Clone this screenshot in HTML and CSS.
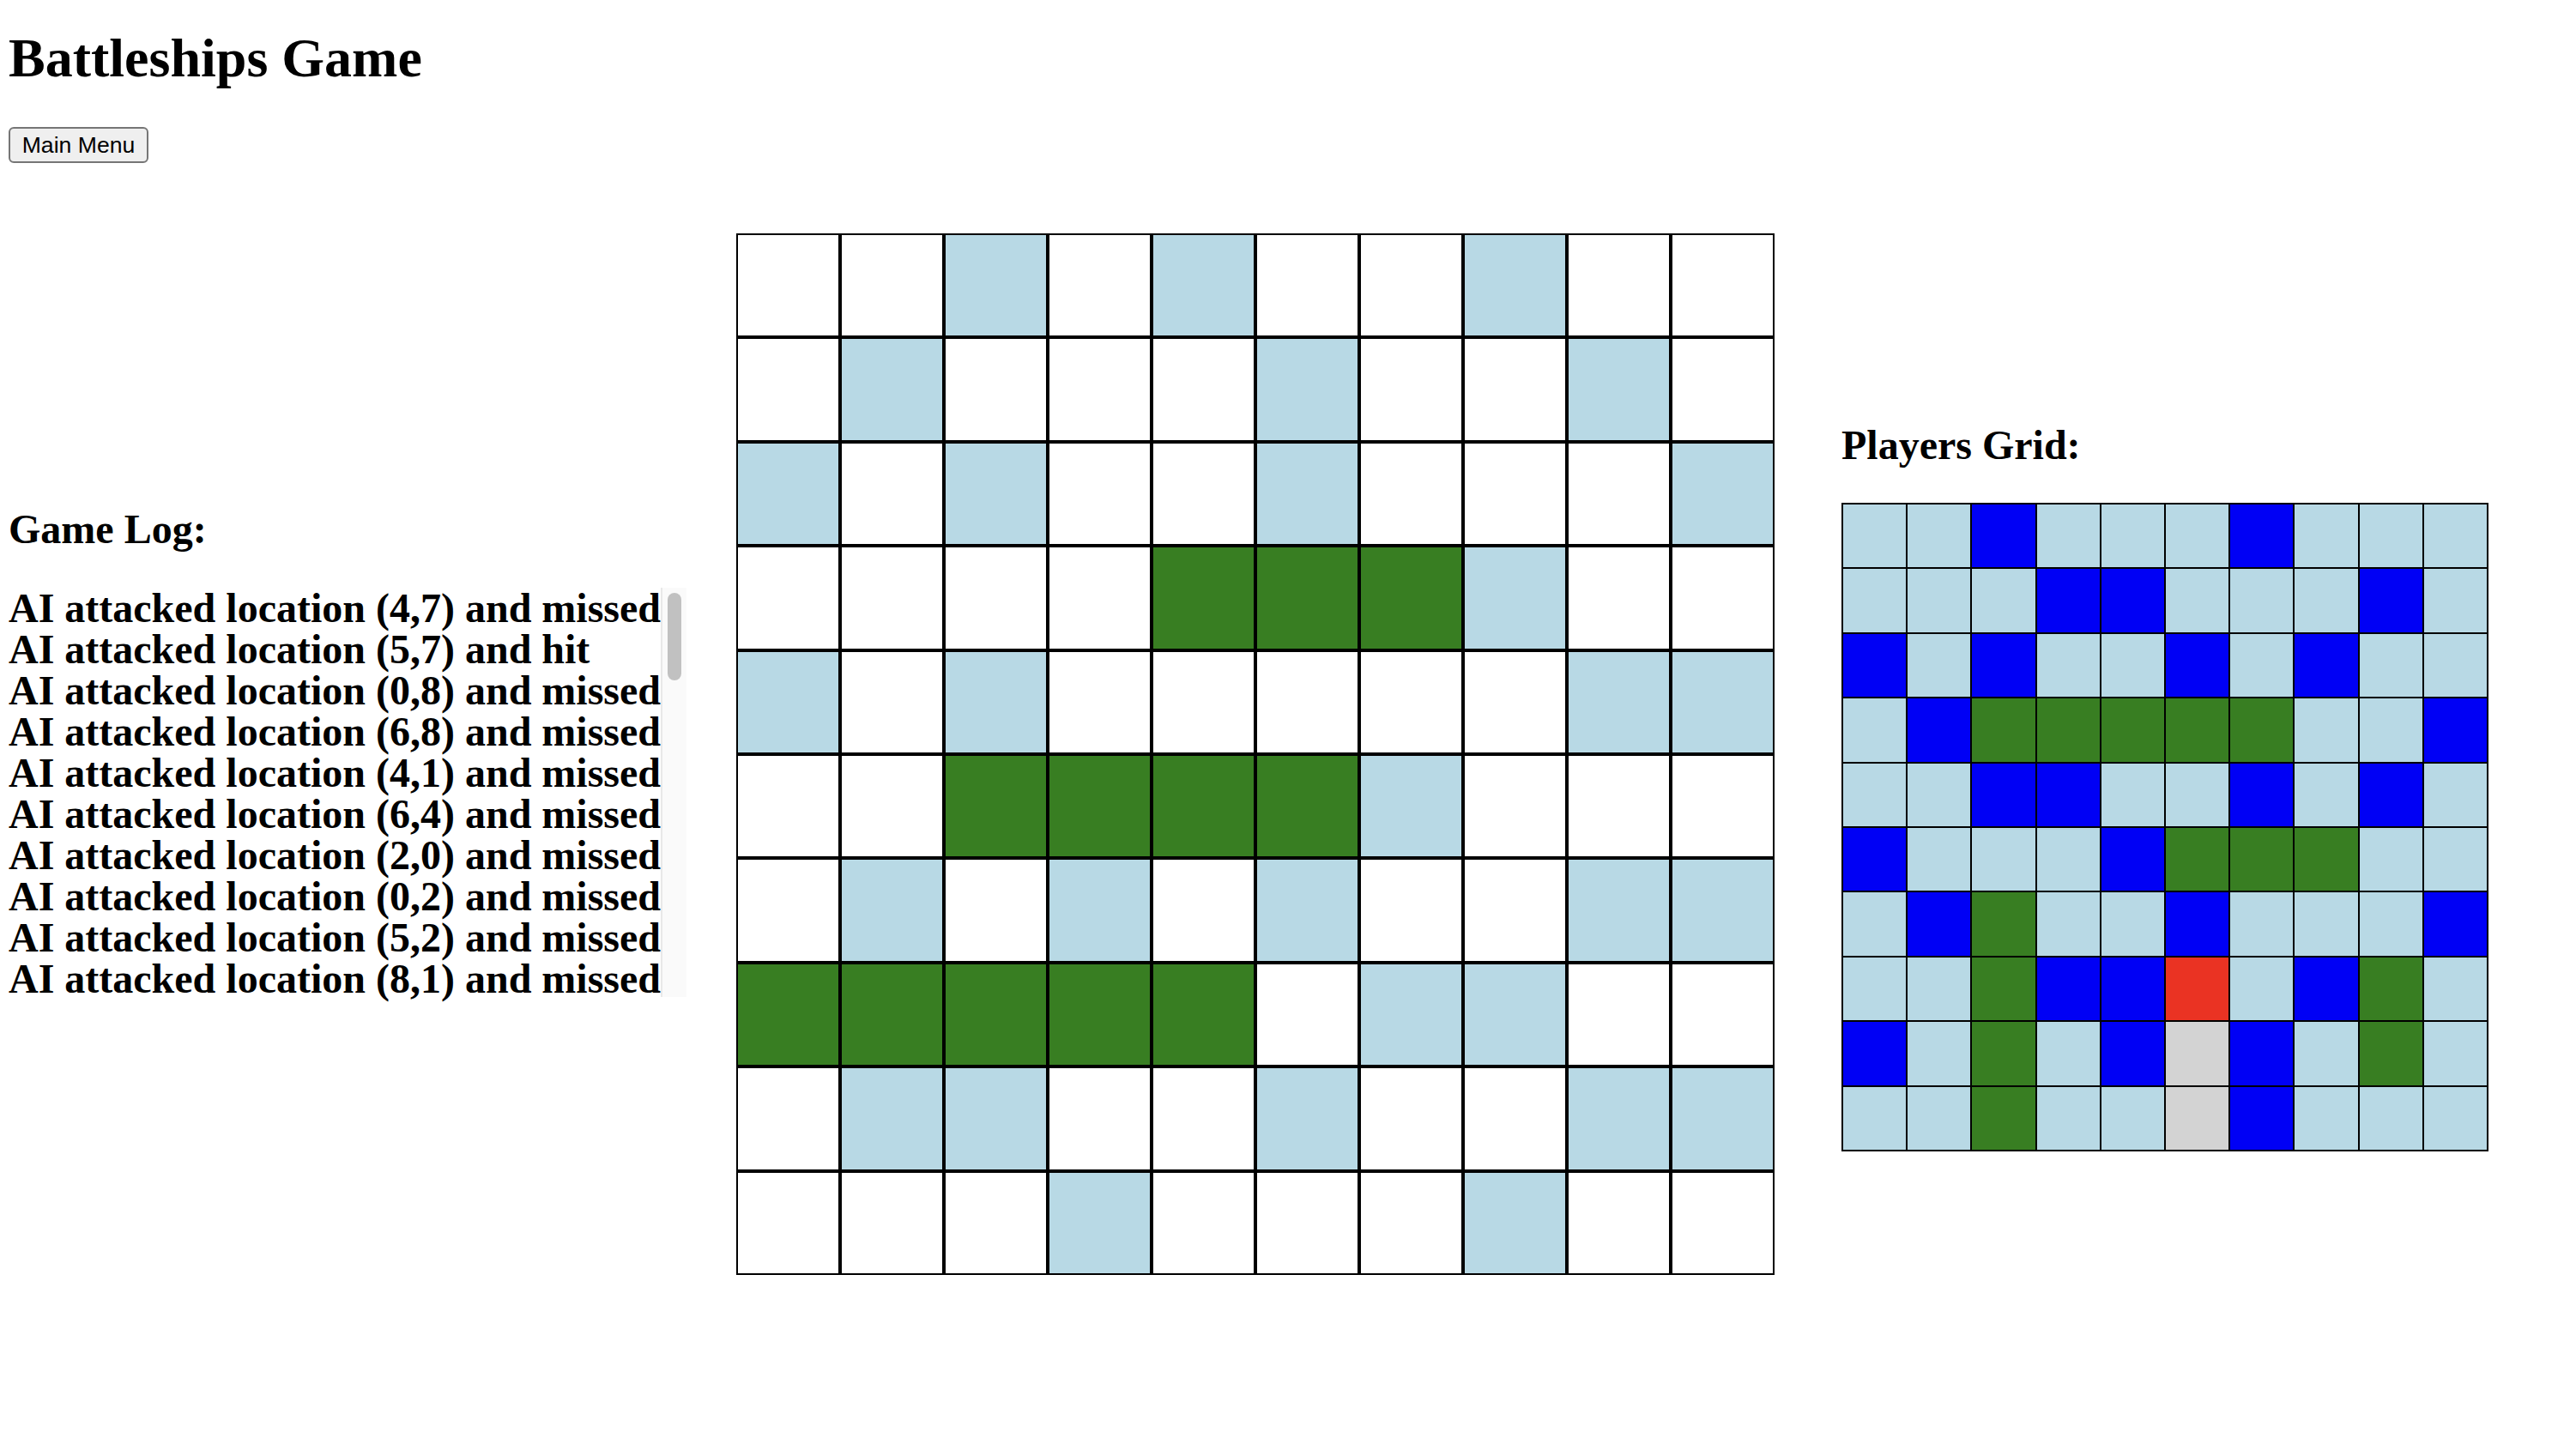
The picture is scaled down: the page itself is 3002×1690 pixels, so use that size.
FILE: index.html
```html
<!DOCTYPE html>
<html lang="en">
<head>
    <meta charset="UTF-8">
    <meta name="viewport" content="width=device-width, initial-scale=1.0">
    <title>Battleships Game</title>
    <link rel="stylesheet" href="styles.css">
</head>
<body>

<h1>Battleships Game</h1>

<button class="menu-button">Main Menu</button>

<div class="game">
    <div class="log-column">
        <h2>Game Log:</h2>
        <div class="game-log">
            <div id="gameLog" class="log-entries">
                <div class="log-entry">AI attacked location (4,7) and missed</div>
                <div class="log-entry">AI attacked location (5,7) and hit</div>
                <div class="log-entry">AI attacked location (0,8) and missed</div>
                <div class="log-entry">AI attacked location (6,8) and missed</div>
                <div class="log-entry">AI attacked location (4,1) and missed</div>
                <div class="log-entry">AI attacked location (6,4) and missed</div>
                <div class="log-entry">AI attacked location (2,0) and missed</div>
                <div class="log-entry">AI attacked location (0,2) and missed</div>
                <div class="log-entry">AI attacked location (5,2) and missed</div>
                <div class="log-entry">AI attacked location (8,1) and missed</div>
            </div>
            <div class="log-scrollbar">
                <div class="log-thumb"></div>
            </div>
        </div>
    </div>

    <div id="enemyGrid" class="enemy-grid"></div>

    <div class="player-column">
        <h2>Players Grid:</h2>
        <div id="playerGrid" class="player-grid"></div>
    </div>
</div>

<script>
    // . = unknown, o = missed, # = ship hit
    const enemyRows = [
        '..o.o..o..',
        '.o...o..o.',
        'o.o..o...o',
        '....###o..',
        'o.o.....oo',
        '..####o...',
        '.o.o.o..oo',
        '#####.oo..',
        '.oo..o..oo',
        '...o...o..'
    ];

    // w = water, b = missed, s = ship, h = hit, g = sunk
    const playerRows = [
        'wwbwwwbwww',
        'wwwbbwwwbw',
        'bwbwwbwbww',
        'wbssssswwb',
        'wwbbwwbwbw',
        'bwwwbsssww',
        'wbswwbwwwb',
        'wwsbbhwbsw',
        'bwswbgbwsw',
        'wwswwgbwww'
    ];

    const enemyClasses = { '.': 'unknown', 'o': 'missed', '#': 'ship' };
    const playerClasses = { 'w': 'water', 'b': 'missed', 's': 'ship', 'h': 'hit', 'g': 'sunk' };

    function buildGrid(id, rows, classes) {
        const grid = document.getElementById(id);
        rows.forEach((row) => {
            row.split('').forEach((ch) => {
                const cell = document.createElement('div');
                cell.className = 'cell ' + classes[ch];
                grid.appendChild(cell);
            });
        });
    }

    buildGrid('enemyGrid', enemyRows, enemyClasses);
    buildGrid('playerGrid', playerRows, playerClasses);
</script>

</body>
</html>
```

FILE: styles.css
```css
body {
    margin: 0;
    padding: 0 10px;
    font-family: 'Liberation Serif', 'Times New Roman', serif;
    color: #000;
    background-color: #fff;
}

h1 {
    font-size: 64px;
    line-height: 64px;
    margin: 36px 0 48px;
}

h2 {
    font-size: 48px;
    line-height: 48px;
    margin: 0;
}

.menu-button {
    display: block;
    width: 163px;
    height: 42px;
    padding: 0;
    font-family: 'Liberation Sans', Arial, sans-serif;
    font-size: 26.6px;
    color: #000;
    background-color: #efefef;
    border: 2px solid #767676;
    border-radius: 6px;
    cursor: pointer;
}

.game {
    display: flex;
    align-items: flex-start;
    margin-top: 82px;
}

.log-column {
    margin-top: 321px;
}

.log-column h2 {
    margin-bottom: 44px;
}

.game-log {
    display: flex;
    width: 790px;
}

.log-entries {
    flex: 1;
    font-size: 48px;
    font-weight: bold;
    line-height: 48px;
}

.log-entry {
    white-space: nowrap;
}

/* scroll track drawn beside the entries */
.log-scrollbar {
    width: 28px;
    height: 477px;
    border-left: 2px solid #e8e8e8;
    background-color: #fafafa;
}

.log-thumb {
    width: 16px;
    height: 102px;
    margin: 6px 0 0 6px;
    background-color: #c1c1c1;
    border-radius: 8px;
}

.enemy-grid {
    display: grid;
    grid-template-columns: repeat(10, 121px);
    grid-auto-rows: 121.4px;
    margin-left: 58px;
}

.enemy-grid .cell {
    border: 2px solid #000;
}

.player-column {
    margin-left: 78px;
    margin-top: 223px;
}

.player-column h2 {
    margin-bottom: 43px;
}

.player-grid {
    display: grid;
    grid-template-columns: repeat(10, 73.2px);
    grid-auto-rows: 73.4px;
    gap: 2px;
    width: max-content;
    border: 2px solid #000;
    background-color: #000;
}

.cell.unknown {
    background-color: #fff;
}

.cell.missed {
    background-color: #b8d9e5;
}

.cell.ship {
    background-color: #387e22;
}

.player-grid .cell.water {
    background-color: #b8d9e5;
}

.player-grid .cell.missed {
    background-color: #0000f5;
}

.player-grid .cell.hit {
    background-color: #ea3323;
}

.player-grid .cell.sunk {
    background-color: #d3d3d3;
}
```
